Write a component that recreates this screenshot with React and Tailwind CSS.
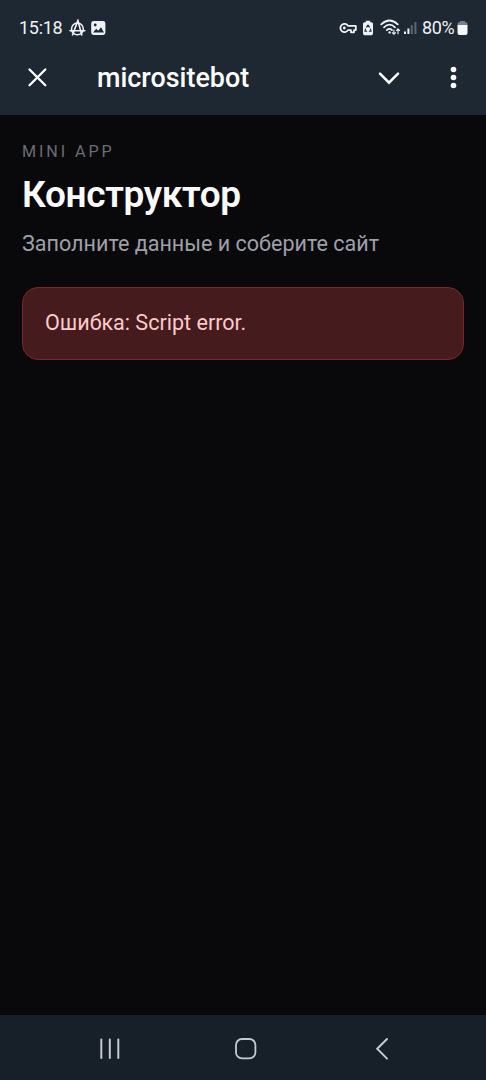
import React from "react";

// Status bar icons
function StatusLeftIcons() {
    return (
        <svg width="38" height="18" viewBox="0 0 38 18" fill="none" stroke="#eef2f5">
            <circle cx="8.4" cy="9.9" r="5.9" strokeWidth="1.5" />
            <path d="M3.6 15.8L8.9 1.6L12.8 16M1 11.8H15.8" strokeWidth="1.6" strokeLinecap="round" />
            <rect x="22.2" y="2" width="14.2" height="14" rx="2.4" fill="#eef2f5" stroke="none" />
            <circle cx="26.2" cy="6" r="1.4" fill="#1e2833" stroke="none" />
            <path d="M24 13.6L27.2 9.8L29.2 11.8L32 8.2L35 13.6Z" fill="#1e2833" stroke="none" />
        </svg>
    );
}

function KeyIcon() {
    return (
        <svg width="18" height="12" viewBox="0 0 18 12" fill="none" stroke="#eef2f5" strokeWidth="1.8" strokeLinejoin="round">
            <path d="M9 3.9A4.1 4.1 0 1 0 9 8.1H12V10.3H15V8.1H16.8V3.9Z" />
            <circle cx="5.3" cy="6" r="1.4" fill="#eef2f5" stroke="none" />
        </svg>
    );
}

function BatterySaverIcon() {
    return (
        <svg width="12" height="16" viewBox="0 0 12 16">
            <path d="M3.8 0.8H8.2V2.2H9.4Q11 2.2 11 3.8V13.6Q11 15.2 9.4 15.2H2.6Q1 15.2 1 13.6V3.8Q1 2.2 2.6 2.2H3.8Z" fill="#eef2f5" />
            <path d="M4.3 7.4L6 5.1L7.7 7.4M8.4 8.7L9 11.3H6.9M5.1 11.3H3L3.6 8.7" fill="none" stroke="#1e2833" strokeWidth="1.1" />
        </svg>
    );
}

function WifiIcon() {
    return (
        <svg width="21" height="17" viewBox="0 0 21 17" fill="none" stroke="#eef2f5" strokeWidth="1.7" strokeLinecap="round">
            <path d="M1.2 5.4Q9.5 -2.4 17.8 5.4M4 8.3Q9.5 3.1 15 8.3M6.8 11.1Q9.5 8.7 12 11.1" />
            <circle cx="9.6" cy="13.4" r="1.2" fill="#eef2f5" stroke="none" />
            <path d="M13.9 11V15M12.3 13.6L13.9 15.3L15.5 13.6M18 14.7V10.2M16.5 11.5L18 9.9L19.5 11.5" strokeWidth="1.1" />
        </svg>
    );
}

function SignalIcon() {
    return (
        <svg width="13" height="14" viewBox="0 0 13 14">
            <path d="M0 10.5h2V13H0zM3.4 7.5h2V13h-2z" fill="#eef2f5" />
            <path d="M6.8 4.2h2V13h-2zM10.4 1h2v12h-2z" fill="#5c6570" />
        </svg>
    );
}

function BatteryIcon() {
    return (
        <svg width="11" height="16" viewBox="0 0 11 16">
            <path d="M3 1H8V2.2H9Q10.5 2.4 10.5 4V5H0.5V4Q0.5 2.4 2 2.2H3Z" fill="#77808a" />
            <path d="M0.5 5H10.5V13Q10.5 15 8.5 15H2.5Q0.5 15 0.5 13Z" fill="#f4f6f8" />
        </svg>
    );
}

function StatusBar() {
    return (
        <div className="flex h-[55px] items-center justify-between pl-[19px] pr-[18px] text-[18px] text-[#eef2f5]">
            <div className="flex items-center">
                <span className="w-[50px] tracking-[-0.3px]">15:18</span>
                <StatusLeftIcons />
            </div>
            <div className="flex items-center">
                <KeyIcon />
                <span className="ml-[5px]"><BatterySaverIcon /></span>
                <span className="ml-[6px]"><WifiIcon /></span>
                <span className="ml-[3px]"><SignalIcon /></span>
                <span className="ml-[5px] w-[35px] tracking-[-0.4px]">80%</span>
                <BatteryIcon />
            </div>
        </div>
    );
}

function AppHeader() {
    return (
        <div className="flex h-[60px] items-start pl-[27px]">
            <svg className="mt-[12px]" width="21" height="21" viewBox="0 0 21 21" stroke="#fff" strokeWidth="2.3" strokeLinecap="round">
                <path d="M2.5 2.5L18.3 18.3M18.3 2.5L2.5 18.3" />
            </svg>
            <h1 className="ml-[49px] w-[280px] pt-px text-[26.9px] leading-[44px] font-medium text-white">micrositebot</h1>
            <svg className="mt-[15px]" width="24" height="16" viewBox="0 0 24 16" fill="none" stroke="#fff" strokeWidth="2.5" strokeLinecap="round">
                <path d="M3 3.7L12 12.7L21 3.7" />
            </svg>
            <svg className="ml-[49px] mt-[11px]" width="8" height="24" viewBox="0 0 8 24" fill="#fff">
                <circle cx="3.5" cy="3.5" r="2.8" />
                <circle cx="3.5" cy="11.5" r="2.8" />
                <circle cx="3.5" cy="19.5" r="2.8" />
            </svg>
        </div>
    );
}

// System navigation
function NavBar() {
    return (
        <nav className="flex h-[65px] items-center justify-between bg-[#171f28] pl-[98px] pr-[95px] pt-[3px]">
            <svg width="24" height="24" viewBox="0 0 24 24" stroke="#c5cad0" strokeWidth="2" strokeLinecap="round">
                <path d="M3.3 2.5V21M11.8 2.5V21M20.3 2.5V21" />
            </svg>
            <svg className="mr-[3px]" width="24" height="24" viewBox="0 0 24 24" fill="none" stroke="#c5cad0" strokeWidth="1.8">
                <rect x="2" y="2" width="19.4" height="19.4" rx="6" />
            </svg>
            <svg width="18" height="24" viewBox="0 0 18 24" fill="none" stroke="#c5cad0" strokeWidth="2" strokeLinecap="round">
                <path d="M14 2L4.2 11.8L14 21.6" />
            </svg>
        </nav>
    );
}

export default function App() {
    return (
        <div className="flex h-[1080px] w-[486px] flex-col overflow-hidden bg-[#09090b] font-['Roboto',sans-serif]">
            <header className="h-[115px] bg-[#1e2833]">
                <StatusBar />
                <AppHeader />
            </header>

            <main className="flex-1 px-[22px] pt-[26px]">
                <p className="text-[16.2px] leading-[22px] tracking-[2.9px] text-[#6b6b73]">MINI APP</p>
                <h2 className="mt-[10px] text-[37px] leading-[44px] font-semibold tracking-[-0.35px] text-[#fafafa]">Конструктор</h2>
                <p className="mt-[12px] text-[21.55px] leading-[30px] text-[#9f9fa9]">Заполните данные и соберите сайт</p>
                <div className="mt-[28px] h-[73px] rounded-[16px] border border-[#7b2729] bg-[#451b1d] px-[22px] text-[21.55px] leading-[70px] text-[#ffcaca]">
                    Ошибка: Script error.
                </div>
            </main>

            <NavBar />
        </div>
    );
}
